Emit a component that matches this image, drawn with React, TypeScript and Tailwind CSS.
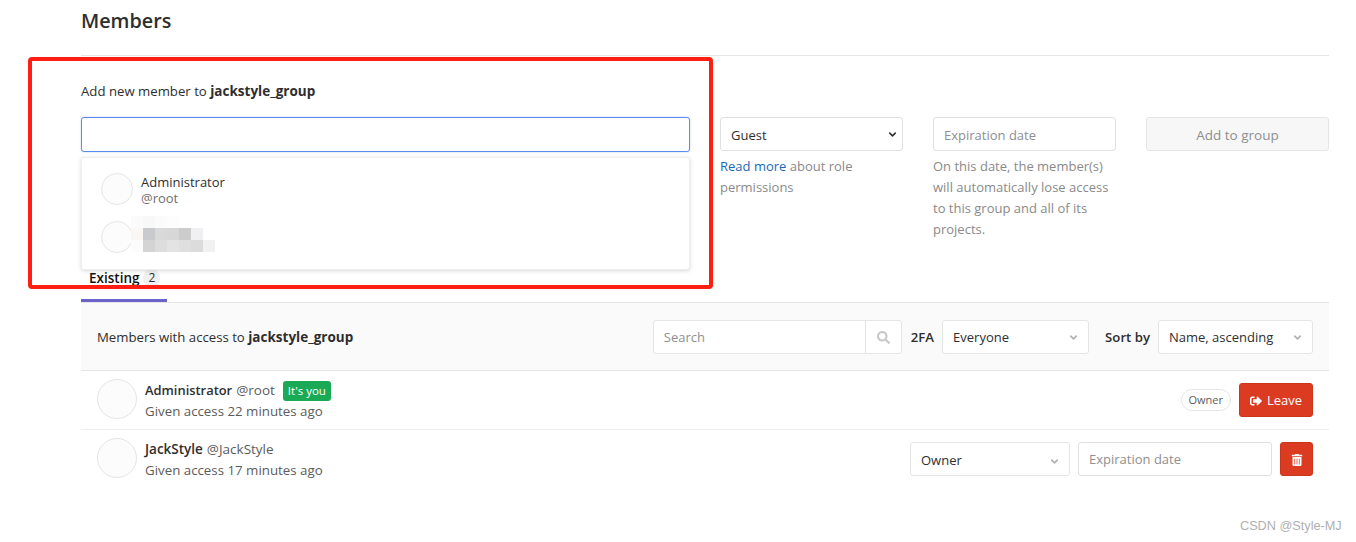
import React from 'react';
import { ChevronDown } from 'lucide-react';
import { FaSearch, FaSignOutAlt, FaTrashAlt } from 'react-icons/fa';

function Avatar({ size = 'w-10 h-10 -mt-[2px]' }: { size?: string }) {
  return <div className={`${size} shrink-0 rounded-full border border-[#e5e5e5] bg-[#fcfcfc]`} />;
}

function FakeSelect({ label, className }: { label: string; className: string }) {
  return (
    <div className={`flex h-[34px] items-center justify-between rounded-[3px] border border-[#e5e5e5] bg-white pl-[10px] pr-[9px] text-[#2e2e2e] ${className}`}>
      <span>{label}</span>
      <ChevronDown className="h-[11px] w-[11px] text-[#b3b3b3]" strokeWidth={4} />
    </div>
  );
}

function MemberRow({ name, nameSize, handle, ago, you, className, children }: { name: string; nameSize: string; handle: string; ago: string; you?: boolean; className: string; children: React.ReactNode }) {
  return (
    <div className={`flex items-center justify-between px-4 ${className}`}>
      <div className="flex items-center gap-2">
        <Avatar />
        <div className="pt-[2px] leading-[21px] text-[#2e2e2e]">
          <div className="flex items-center">
            <span className={`${nameSize} font-semibold`}>{name}</span>
            <span className="ml-[4px] text-[13.5px] text-[#5c5c5c]">{handle}</span>
            {you && <span className="ml-[8px] rounded-[3px] bg-[#1aaa55] px-[5px] text-[11.5px] leading-[20px] text-white">It's you</span>}
          </div>
          <div className="text-[13.3px] text-[#5c5c5c]">{ago}</div>
        </div>
      </div>
      <div className="flex items-center gap-2">{children}</div>
    </div>
  );
}

export default function App() {
  return (
    <div className="relative h-[542px] w-[1356px] overflow-hidden bg-white font-['Open_Sans','Noto_Sans',sans-serif] text-[13px] text-[#2e2e2e]">
      <div className="ml-[81px] w-[1248px]">
        <h1 className="flex h-[55px] items-start pt-[7px] text-[19.8px] font-semibold leading-[28px] text-[#2e2e2e]">Members</h1>
        <div className="border-t border-[#e5e5e5] pt-[25px]">
          <p className="text-[13.2px] leading-[20px]">
            Add new member to <span className="text-[13.5px] font-bold">jackstyle_group</span>
          </p>
          <div className="mt-[16px] flex gap-[30px]">
            <div className="relative w-[609px]">
              <div className="h-[35px] rounded-[3px] border border-[#5b8def] bg-white shadow-[0_0_2px_rgba(70,120,220,0.4)]" />
            </div>
            <div className="w-[183px]">
              <div className="flex h-[34px] items-center justify-between rounded-[3px] border border-[#e0e0e0] bg-white pl-[10px] pr-[4px] pt-[4px]">
                <span>Guest</span>
                <ChevronDown className="mb-[3px] h-[11px] w-[11px] text-[#333333]" strokeWidth={3.5} />
              </div>
              <p className="mt-[5px] leading-[21px] text-[#8a8a8a]">
                <span className="text-[#1b69b6]">Read more</span> about role permissions
              </p>
            </div>
            <div className="w-[183px]">
              <div className="flex h-[34px] items-center rounded-[3px] border border-[#e0e0e0] bg-white px-[10px] pt-[4px] text-[#8f8f8f]">Expiration date</div>
              <p className="mt-[5px] leading-[21px] text-[#8a8a8a]">On this date, the member(s) will automatically lose access to this group and all of its projects.</p>
            </div>
            <div className="flex h-[34px] w-[183px] items-center justify-center rounded-[3px] border border-[#e5e5e5] bg-[#f7f7f7] pt-[2px] text-[13.5px] text-[#8f8f8f]">Add to group</div>
          </div>
        </div>

        <div className="mt-[29px] border-b border-[#e5e5e5]">
          <div className="flex h-[33px] w-[86px] items-start gap-[4px] border-b-[3px] border-[#6b63c9] pl-[8px]">
            <span className="text-[13.5px] font-semibold leading-[19px] text-[#111111]">Existing</span>
            <span className="h-[18px] rounded-full bg-[#f0f0f0] px-[5px] text-[12px] leading-[18px] text-[#2e2e2e]">2</span>
          </div>
        </div>

        <div className="flex h-[68px] items-center justify-between border-b border-[#e5e5e5] bg-[#fafafa] px-4">
          <p className="pt-[2px] text-[13.2px]">
            Members with access to <span className="text-[13.5px] font-bold">jackstyle_group</span>
          </p>
          <div className="flex items-center">
            <div className="flex h-[34px] w-[249px] items-center rounded-[3px] border border-[#e5e5e5] bg-white text-[#8f8f8f]">
              <span className="flex-1 pl-[10px] pt-[2px]">Search</span>
              <span className="flex h-full w-[36px] items-center justify-center border-l border-[#e5e5e5] pt-[2px]">
                <FaSearch className="h-[13px] w-[13px] text-[#c8c8c8]" />
              </span>
            </div>
            <span className="ml-[9px] pt-[2px] text-[13.2px] font-semibold">2FA</span>
            <FakeSelect label="Everyone" className="ml-2 w-[147px] pt-[2px]" />
            <span className="ml-4 pt-[2px] text-[13.2px] font-semibold">Sort by</span>
            <FakeSelect label="Name, ascending" className="ml-2 w-[155px] pt-[2px]" />
          </div>
        </div>

        <MemberRow name="Administrator" nameSize="text-[12.9px]" handle="@root" ago="Given access 22 minutes ago" you className="h-[59px] border-b border-[#eeeeee]">
          <span className="rounded-full border border-[#e5e5e5] px-[7px] text-[11px] leading-[20px] text-[#5c5c5c]">Owner</span>
          <div className="flex h-[34px] w-[74px] items-center justify-center gap-[5px] rounded-[3px] border border-[#c9361a] bg-[#db3b21] pt-[2px] text-white">
            <FaSignOutAlt className="h-[12px] w-[12px]" />
            Leave
          </div>
        </MemberRow>
        <MemberRow name="JackStyle" nameSize="text-[13.5px]" handle="@JackStyle" ago="Given access 17 minutes ago" className="h-[58px]">
          <FakeSelect label="Owner" className="w-[160px] pt-[4px]" />
          <div className="flex h-[34px] w-[194px] items-center rounded-[3px] border border-[#e0e0e0] bg-white px-[10px] pt-[2px] text-[#8f8f8f]">Expiration date</div>
          <div className="flex h-[34px] w-[33px] items-center justify-center rounded-[3px] border border-[#c9361a] bg-[#db3b21] pt-[2px] text-white">
            <FaTrashAlt className="h-[12px] w-[12px]" />
          </div>
        </MemberRow>
      </div>

      {/* user dropdown under the search input */}
      <div className="absolute left-[81px] top-[157px] h-[113px] w-[609px] rounded-[3px] border border-[#eeeeee] bg-white shadow-[0_1px_4px_rgba(0,0,0,0.15)]">
        <div className="flex items-center gap-2 pl-[19px] pt-[14px]">
          <Avatar size="w-8 h-8" />
          <div className="pt-[2px] leading-[16px]">
            <div className="text-[#2e2e2e]">Administrator</div>
            <div className="text-[#707070]">@root</div>
          </div>
        </div>
        <div className="mt-[15px] pl-[19px]">
          <Avatar size="w-8 h-8" />
        </div>
        {/* mosaic over the second user's name */}
        <div className="absolute left-[49px] top-[58px] grid grid-cols-[repeat(7,12px)] grid-rows-[repeat(3,12px)]">
          <div className="bg-[#fbfbfb]" /><div className="bg-[#f8f8f8]" /><div className="bg-[#fbfbfb]" /><div className="bg-[#fdfdfd]" /><div /><div /><div />
          <div className="bg-[#f9f6f4]" /><div className="bg-[#c9cacd]" /><div className="bg-[#d9d9d9]" /><div className="bg-[#d7d7d7]" /><div className="bg-[#cccccc]" /><div className="bg-[#f0f0f2]" /><div />
          <div className="bg-[#fcfcfc]" /><div className="bg-[#d4d4d4]" /><div className="bg-[#dddddd]" /><div className="bg-[#e3e3e3]" /><div className="bg-[#dfdfdf]" /><div className="bg-[#dcdcdc]" /><div className="bg-[#f1f1f1]" />
        </div>
      </div>

      {/* red annotation */}
      <div className="pointer-events-none absolute left-[28px] top-[57px] h-[232px] w-[685px] rounded-[4px] border-[4px] border-[#ff1e12]" />

      <span className="absolute left-[1240px] top-[517px] font-['Liberation_Sans',sans-serif] text-[12.7px] leading-[18px] text-[#b0b0b0]">CSDN @Style-MJ</span>
    </div>
  );
}
